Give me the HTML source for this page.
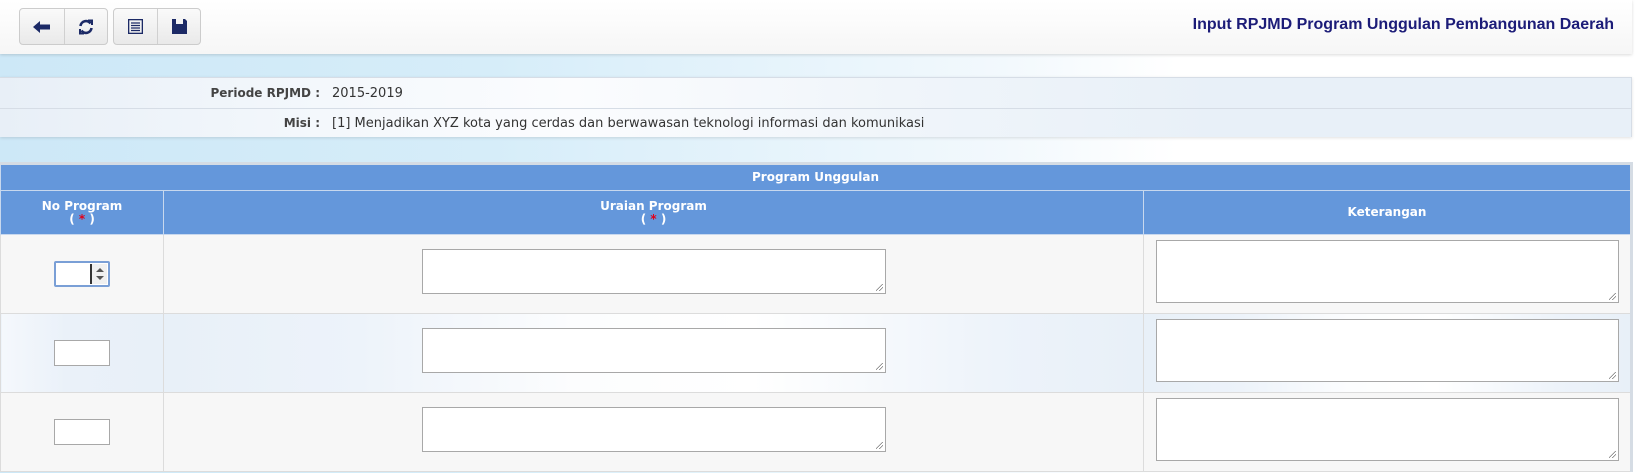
<!DOCTYPE html>
<html><head><meta charset="utf-8"><style>
*{box-sizing:border-box;margin:0;padding:0}
body{width:1635px;height:473px;overflow:hidden;font-family:"DejaVu Sans",Verdana,sans-serif;background:linear-gradient(90deg,#cde8f7 0%,#d6edf9 30%,#f3f9fd 62%,#fff 72%,#fff 100%);position:relative}
.hdr{position:absolute;left:0;top:0;width:1632px;height:54px;background:linear-gradient(#fff,#f6f6f6);box-shadow:0 1px 3px rgba(0,0,0,.15)}
.grp{position:absolute;top:8px;height:37px;border:1px solid #ccc;border-radius:4px;background:linear-gradient(#fafafa,#e9e9e9);display:flex}
.grp div{width:50%;height:100%;display:flex;align-items:center;justify-content:center}
.grp div+div{border-left:1px solid #d0d0d0}
.title{position:absolute;right:18px;top:16px;font:bold 16px "Liberation Sans",Arial,sans-serif;color:#1c1c78}
.info{position:absolute;left:0;top:77px;width:1632px;height:60px;border:1px solid #d6dde6;border-left:0;box-shadow:0 1px 3px rgba(0,0,0,.12)}
.row{height:30px;font-size:13px;color:#333;display:flex;align-items:center;background:linear-gradient(90deg,#e8eff7 0%,#f4f8fc 20%,#fbfcfe 35%,#f0f5fa 55%,#e8f0f8 75%,#e8f0f8 100%)}
.row+.row{border-top:1px solid #d6dde6;height:29px}
.lbl{width:320px;text-align:right;font-weight:bold;font-size:12px;color:#444}
.val{padding-left:12px}
table{position:absolute;left:0;top:162px;width:1633px;border-collapse:collapse;border-right:3px solid #d5dce4;border-top:3px solid #d5dce4}
th{background:#6497db;color:#fff;font-size:12px;font-weight:bold;border:1px solid #c8d8ee;text-align:center;line-height:13px}
th.t{height:27px;border-top:0}
th.c{height:44px}
.r{color:#e0001b}
td{border:1px solid #dcdcdc;background:#f7f7f7;height:79px;text-align:center;vertical-align:middle}
tr.b td{background:linear-gradient(90deg,#e8f0f8 0%,#edf3fa 20%,#fcfdfe 42%,#fff 60%,#edf3fa 85%,#e8f0f8 100%)}
tr.b td:first-child{background:linear-gradient(90deg,#f5f8fc 0%,#eaf1f9 40%,#e8f0f8 100%)}
.num{display:inline-block;width:56px;height:26px;border:1px solid #a8a8a8;background:#fff;vertical-align:middle;position:relative}
.ta{display:inline-block;width:464px;height:45px;border:1px solid #a8a8a8;background:#fff;position:relative;vertical-align:middle;margin-top:-6px}
.kt{display:inline-block;width:463px;height:63px;border:1px solid #a8a8a8;background:#fff;position:relative;vertical-align:middle;margin-top:-6px}
.ta:after,.kt:after{content:"";position:absolute;right:2px;bottom:2px;width:7px;height:7px;background:linear-gradient(135deg,transparent 45%,#777 45%,#777 52%,transparent 52%,transparent 70%,#777 70%,#777 77%,transparent 77%)}
.sp{position:absolute;right:1px;top:1px;bottom:1px;width:17px;background:#f0f0f0;border-left:2px solid #333}
.sp:before{content:"";position:absolute;left:4px;top:4px;border:4px solid transparent;border-bottom:4px solid #555;border-top:0}
.sp:after{content:"";position:absolute;left:4px;bottom:4px;border:4px solid transparent;border-top:4px solid #555;border-bottom:0}
</style></head><body>
<div class="hdr">
 <div class="grp" style="left:19px;width:89px">
  <div><svg width="18" height="14" viewBox="0 0 18 14"><path d="M0 7L7 1V4.5H17V9.5H7V13Z" fill="#1c2a66"/></svg></div>
  <div><svg width="16" height="16" viewBox="0 0 16 16" fill="none" stroke="#1c2a66" stroke-width="2.6"><path d="M2.5 7A5.5 5.5 0 0 1 12.5 4.5"/><path d="M13.5 9A5.5 5.5 0 0 1 3.5 11.5"/><path d="M10 1.5L14 1.5 14 6" stroke-width="2"/><path d="M6 14.5L2 14.5 2 10" stroke-width="2"/></svg></div>
 </div>
 <div class="grp" style="left:113px;width:88px">
  <div><svg width="15" height="15" viewBox="0 0 15 15"><rect x="0.5" y="0.5" width="14" height="14" fill="none" stroke="#1c2a66" stroke-width="1.6"/><path d="M3 4H12M3 6.5H12M3 9H12M3 11.5H12" stroke="#1c2a66" stroke-width="1.3"/></svg></div>
  <div><svg width="15" height="15" viewBox="0 0 15 15"><path d="M0 0H4V5H11V0H13L15 2V15H0Z" fill="#1c2a66"/><rect x="3" y="9" width="9" height="6" fill="#1c2a66"/></svg></div>
 </div>
 <div class="title">Input RPJMD Program Unggulan Pembangunan Daerah</div>
</div>
<div class="info">
 <div class="row"><div class="lbl">Periode RPJMD :</div><div class="val">2015-2019</div></div>
 <div class="row"><div class="lbl">Misi :</div><div class="val">[1] Menjadikan XYZ kota yang cerdas dan berwawasan teknologi informasi dan komunikasi</div></div>
</div>
<table>
 <tr><th class="t" colspan="3">Program Unggulan</th></tr>
 <tr><th class="c" style="width:163px">No Program<br>( <span class="r">*</span> )</th><th class="c" style="width:980px">Uraian Program<br>( <span class="r">*</span> )</th><th class="c">Keterangan</th></tr>
 <tr><td><span class="num" style="border:2px solid #7a9fd6;border-radius:2px"><span class="sp"></span></span></td><td><span class="ta"></span></td><td><span class="kt"></span></td></tr>
 <tr class="b"><td><span class="num"></span></td><td><span class="ta"></span></td><td><span class="kt"></span></td></tr>
 <tr><td><span class="num"></span></td><td><span class="ta"></span></td><td><span class="kt"></span></td></tr>
</table>
</body></html>
